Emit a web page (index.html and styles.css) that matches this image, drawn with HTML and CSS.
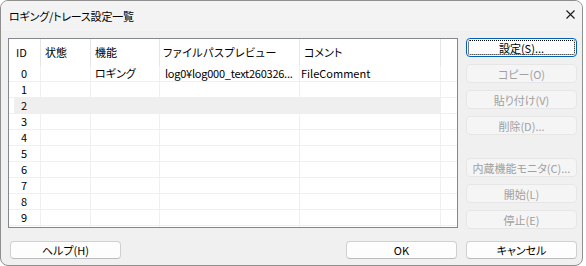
FILE: index.html
```html
<!DOCTYPE html>
<html lang="ja">
<head>
<meta charset="utf-8">
<title>ロギング/トレース設定一覧</title>
<link rel="stylesheet" href="styles.css">
</head>
<body>
<div class="window">
  <div class="titlebar">
    <span class="title">ロギング/トレース設定一覧</span>
    <svg class="close" viewBox="0 0 9 9" width="9" height="9"><path d="M0.5 0.5 L8.5 8.5 M8.5 0.5 L0.5 8.5" stroke="#1a1a1a" stroke-width="1.1" fill="none"/></svg>
  </div>
  <div class="client">
    <div class="main">
      <div class="list">
        <div class="lrow head">
          <div class="c c1">ID</div><div class="c">状態</div><div class="c">機能</div><div class="c wide">ファイルパスプレビュー</div><div class="c">コメント</div><div class="c fill"></div>
        </div>
        <div class="lrow">
          <div class="c c1">0</div><div class="c"></div><div class="c">ロギング</div><div class="c path">log0¥log000_text260326...</div><div class="c cm">FileComment</div><div class="c fill"></div>
        </div>
        <div class="lrow"><div class="c c1">1</div><div class="c"></div><div class="c"></div><div class="c"></div><div class="c"></div><div class="c fill"></div></div>
        <div class="lrow sel"><div class="c c1">2</div><div class="c"></div><div class="c"></div><div class="c"></div><div class="c"></div><div class="c fill"></div></div>
        <div class="lrow"><div class="c c1">3</div><div class="c"></div><div class="c"></div><div class="c"></div><div class="c"></div><div class="c fill"></div></div>
        <div class="lrow"><div class="c c1">4</div><div class="c"></div><div class="c"></div><div class="c"></div><div class="c"></div><div class="c fill"></div></div>
        <div class="lrow"><div class="c c1">5</div><div class="c"></div><div class="c"></div><div class="c"></div><div class="c"></div><div class="c fill"></div></div>
        <div class="lrow"><div class="c c1">6</div><div class="c"></div><div class="c"></div><div class="c"></div><div class="c"></div><div class="c fill"></div></div>
        <div class="lrow"><div class="c c1">7</div><div class="c"></div><div class="c"></div><div class="c"></div><div class="c"></div><div class="c fill"></div></div>
        <div class="lrow"><div class="c c1">8</div><div class="c"></div><div class="c"></div><div class="c"></div><div class="c"></div><div class="c fill"></div></div>
        <div class="lrow"><div class="c c1">9</div><div class="c"></div><div class="c"></div><div class="c"></div><div class="c"></div><div class="c fill"></div></div>
        <div class="lrow"><div class="c c1"></div><div class="c"></div><div class="c"></div><div class="c"></div><div class="c"></div><div class="c fill"></div></div>
      </div>
      <div class="side">
        <button class="btn def">設定(S)...</button>
        <button class="btn dis">コピー(O)</button>
        <button class="btn dis">貼り付け(V)</button>
        <button class="btn dis">削除(D)...</button>
        <div class="spacer"></div>
        <button class="btn dis">内蔵機能モニタ(C)...</button>
        <button class="btn dis">開始(L)</button>
        <button class="btn dis">停止(E)</button>
      </div>
    </div>
    <div class="bottom">
      <button class="btn low">ヘルプ(H)</button>
      <div class="okcancel">
        <button class="btn low">OK</button>
        <button class="btn low">キャンセル</button>
      </div>
    </div>
  </div>
</div>
</body>
</html>
```
FILE: styles.css
```css
html, body {
  margin: 0;
  background: #ffffff;
}
body {
  font-family: "Noto Sans CJK JP", "Noto Sans", sans-serif;
  font-size: 11px;
  font-feature-settings: "palt";
  color: #000;
}
.window {
  width: 583px;
  height: 266px;
  box-sizing: border-box;
  border: 1px solid #8f8f8f;
  border-radius: 8px;
  overflow: hidden;
  display: flex;
  flex-direction: column;
  background: #f0f0f0;
}
.titlebar {
  height: 30px;
  flex: none;
  background: #f3f3f3;
  display: flex;
  justify-content: space-between;
  padding: 0 7px 0 8px;
}
.title {
  line-height: 30px;
  letter-spacing: -0.2px;
}
.close {
  margin-top: 9px;
  display: block;
}
.client {
  flex: 1;
  display: flex;
  flex-direction: column;
  padding: 7px 5px 7px 7px;
}
.main {
  display: flex;
  gap: 8px;
}
.list {
  width: 450px;
  height: 190px;
  box-sizing: border-box;
  border: 1px solid #828790;
  background: #fff;
  overflow: hidden;
  flex: none;
}
.lrow {
  display: grid;
  grid-template-columns: 32px 50px 69px 140px 141px 16px;
  height: 16px;
  box-sizing: border-box;
  border-bottom: 1px solid #f0f0f0;
  line-height: 15px;
}
.lrow.head {
  height: 27px;
  border-bottom: none;
  line-height: 27px;
}
.c {
  box-sizing: border-box;
  border-right: 1px solid #f0f0f0;
  padding-left: 4px;
  white-space: nowrap;
  overflow: hidden;
}
.head .c {
  border-right-color: #e5e5e5;
}
.head .c.wide {
  padding-left: 3px;
  letter-spacing: 0.5px;
}
.c.fill {
  border-right: none;
}
.c1 {
  padding-left: 12px;
}
.head .c1 {
  padding-left: 7px;
}
.c.path {
  padding-left: 5px;
  letter-spacing: -0.25px;
}
.c.cm {
  padding-left: 1px;
}
.lrow.sel {
  border-bottom-color: #efefef;
}
.lrow.sel .c {
  background: #efefef;
  border-right-color: #efefef;
}
.lrow.sel .c1 {
  background: linear-gradient(to right, #fff 5px, #efefef 5px);
}
.lrow.sel .c.fill {
  background: #fff;
}
.side {
  width: 111px;
  flex: none;
  display: flex;
  flex-direction: column;
  gap: 7px;
}
.spacer {
  height: 9px;
}
.btn {
  height: 19px;
  box-sizing: border-box;
  margin: 0;
  padding: 0;
  font: inherit;
  font-feature-settings: "palt";
  line-height: 16px;
  color: #000;
  background: #fdfdfd;
  border: 1px solid #d0d0d0;
  border-bottom-color: #bcbcbc;
  border-radius: 4px;
  text-align: center;
  white-space: nowrap;
}
.btn.low {
  height: 18px;
  width: 111px;
  line-height: 15px;
}
.btn.dis {
  background: #f5f5f5;
  border-color: #e6e6e6;
  color: #a0a0a0;
}
.btn.def {
  position: relative;
  border-color: #005fb8;
}
.btn.def::after {
  content: "";
  position: absolute;
  inset: 1px;
  border: 1px dotted #000;
  border-radius: 2px;
}
.bottom {
  margin-top: 12px;
  display: flex;
  justify-content: space-between;
  padding-left: 2px;
}
.okcancel {
  display: flex;
  gap: 9px;
}
```
